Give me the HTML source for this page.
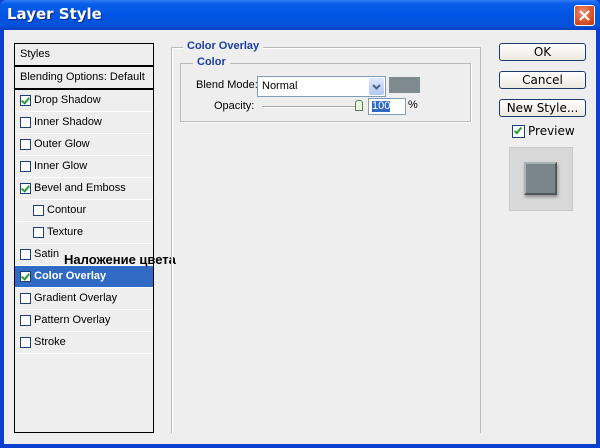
<!DOCTYPE html>
<html><head><meta charset="utf-8"><style>
*{margin:0;padding:0;box-sizing:border-box}
body{width:600px;height:448px;overflow:hidden;font-family:"Liberation Sans",sans-serif;font-size:11px;color:#000;background:#0a3fd0;position:relative}
.abs{position:absolute}
#title{left:0;top:0;width:600px;height:30px;background:linear-gradient(#2f7cf4 0,#0b5ee8 12%,#0054e3 50%,#0552db 85%,#0a3fbf 100%);border-radius:6px 6px 0 0}
#title span{position:absolute;left:7px;top:5px;color:#fff;font:bold 15px "DejaVu Sans",sans-serif;text-shadow:1px 1px #0a2c80}
#close{left:574px;top:5px;width:21px;height:21px;border:1px solid #fff;border-radius:3px;background:radial-gradient(circle at 40% 35%,#f09070,#d6512a 60%,#b83810)}
#client{left:4px;top:30px;width:592px;height:414px;background:#eeeeee}
#list{left:14px;top:43px;width:140px;height:390px;border:1px solid #000;background:#eeeeee}
.row{position:absolute;left:0;width:138px;height:22px;border-bottom:1px solid #fff;font-size:11px;line-height:21px}
.cb{position:absolute;top:5px;width:11px;height:11px;border:1px solid #1c3f7a;background:#fff}
.cb.on::after{content:"";position:absolute;left:2px;top:0px;width:3px;height:6px;border:solid #2a9a2a;border-width:0 2px 2px 0;transform:rotate(40deg)}
.btn{position:absolute;left:499px;width:87px;height:18px;border:1px solid #1d3a6e;border-radius:3px;background:linear-gradient(#fff,#ece9e0);font-size:12px;text-align:center;line-height:16px;font-family:"DejaVu Sans",sans-serif}
</style></head><body>
<div id="title" class="abs"><span>Layer Style</span></div>
<div id="close" class="abs"><svg width="19" height="19" style="position:absolute;left:0;top:0"><path d="M5 5L14 14M14 5L5 14" stroke="#fff" stroke-width="2.2"/></svg></div>
<div id="client" class="abs"></div>

<div id="list" class="abs">
 <div class="row" style="top:0;height:23px;border-bottom:2px solid #000;padding-left:5px">Styles</div>
 <div class="row" style="top:23px;height:23px;border-bottom:2px solid #000;padding-left:5px">Blending Options: Default</div>
 <div class="row" style="top:46px"><div class="cb on" style="left:5px"></div><span style="position:absolute;left:19px">Drop Shadow</span></div>
 <div class="row" style="top:68px"><div class="cb" style="left:5px"></div><span style="position:absolute;left:19px">Inner Shadow</span></div>
 <div class="row" style="top:90px"><div class="cb" style="left:5px"></div><span style="position:absolute;left:19px">Outer Glow</span></div>
 <div class="row" style="top:112px"><div class="cb" style="left:5px"></div><span style="position:absolute;left:19px">Inner Glow</span></div>
 <div class="row" style="top:134px"><div class="cb on" style="left:5px"></div><span style="position:absolute;left:19px">Bevel and Emboss</span></div>
 <div class="row" style="top:156px"><div class="cb" style="left:18px"></div><span style="position:absolute;left:32px">Contour</span></div>
 <div class="row" style="top:178px"><div class="cb" style="left:18px"></div><span style="position:absolute;left:32px">Texture</span></div>
 <div class="row" style="top:200px"><div class="cb" style="left:5px"></div><span style="position:absolute;left:19px">Satin</span></div>
 <div class="row" style="top:222px;background:#316ac5;color:#fff;font-weight:bold"><div class="cb on" style="left:5px"></div><span style="position:absolute;left:19px">Color Overlay</span></div>
 <div class="row" style="top:244px"><div class="cb" style="left:5px"></div><span style="position:absolute;left:19px">Gradient Overlay</span></div>
 <div class="row" style="top:266px"><div class="cb" style="left:5px"></div><span style="position:absolute;left:19px">Pattern Overlay</span></div>
 <div class="row" style="top:288px"><div class="cb" style="left:5px"></div><span style="position:absolute;left:19px">Stroke</span></div>
</div>
<div class="abs" style="left:64px;top:252px;font:bold 13px 'Liberation Sans','DejaVu Sans',sans-serif;color:#000">Наложение цвета</div>

<div class="abs" style="left:171px;top:47px;width:310px;height:386px;border:1px solid #bbb;border-bottom:none;box-shadow:inset 1px 1px #fff"></div>
<div class="abs" style="left:183px;top:40px;background:#eee;padding:0 4px;color:#1a3fa0;font-weight:bold;font-size:11px">Color Overlay</div>
<div class="abs" style="left:180px;top:63px;width:291px;height:59px;border:1px solid #bbb;box-shadow:1px 1px #fff"></div>
<div class="abs" style="left:193px;top:56px;background:#eee;padding:0 4px;color:#1a3fa0;font-weight:bold;font-size:11px">Color</div>
<div class="abs" style="left:196px;top:79px">Blend Mode:</div>
<div class="abs" style="left:257px;top:76px;width:129px;height:21px;border:1px solid #7f9db9;background:#fff"><span style="position:absolute;left:4px;top:3px">Normal</span>
 <div style="position:absolute;right:1px;top:1px;width:15px;height:17px;background:linear-gradient(#dde8fc,#b4c8f4);border-radius:2px"><svg width="15" height="17"><path d="M4 7L7.5 10.5L11 7" stroke="#4d6185" stroke-width="2" fill="none"/></svg></div></div>
<div class="abs" style="left:389px;top:77px;width:31px;height:16px;background:#7f8a8e"></div>
<div class="abs" style="left:214px;top:100px">Opacity:</div>
<div class="abs" style="left:262px;top:106px;width:101px;height:2px;background:#a8a8a0;border-bottom:1px solid #fff"></div>
<div class="abs" style="left:355px;top:100px;width:8px;height:11px;background:#e8f8e0;border:1px solid #5a7a5a;border-radius:3px 3px 0 0"></div>
<div class="abs" style="left:368px;top:98px;width:38px;height:17px;border:1px solid #7f9db9;background:#fff"><span style="position:absolute;left:3px;top:2px;background:#316ac5;color:#fff;line-height:11px">100</span></div>
<div class="abs" style="left:408px;top:99px">%</div>

<div class="btn" style="top:43px">OK</div>
<div class="btn" style="top:71px">Cancel</div>
<div class="btn" style="top:99px">New Style...</div>
<div class="abs" style="left:512px;top:125px;width:13px;height:13px;border:1px solid #1c3f7a;background:#fff"><div style="position:absolute;left:3px;top:0;width:4px;height:8px;border:solid #2a9a2a;border-width:0 2px 2px 0;transform:rotate(40deg)"></div></div>
<div class="abs" style="left:528px;top:124px;font-size:12px;font-family:'DejaVu Sans',sans-serif">Preview</div>
<div class="abs" style="left:509px;top:147px;width:64px;height:64px;background:#d8d8d8;border:1px solid #c8c8c8"></div>
<div class="abs" style="left:524px;top:162px;width:33px;height:33px;background:#7b868a;border:2px solid #aab2b5;border-right-color:#50585b;border-bottom-color:#50585b;box-shadow:1px 2px 3px rgba(0,0,0,.35)"></div>
</body></html>
